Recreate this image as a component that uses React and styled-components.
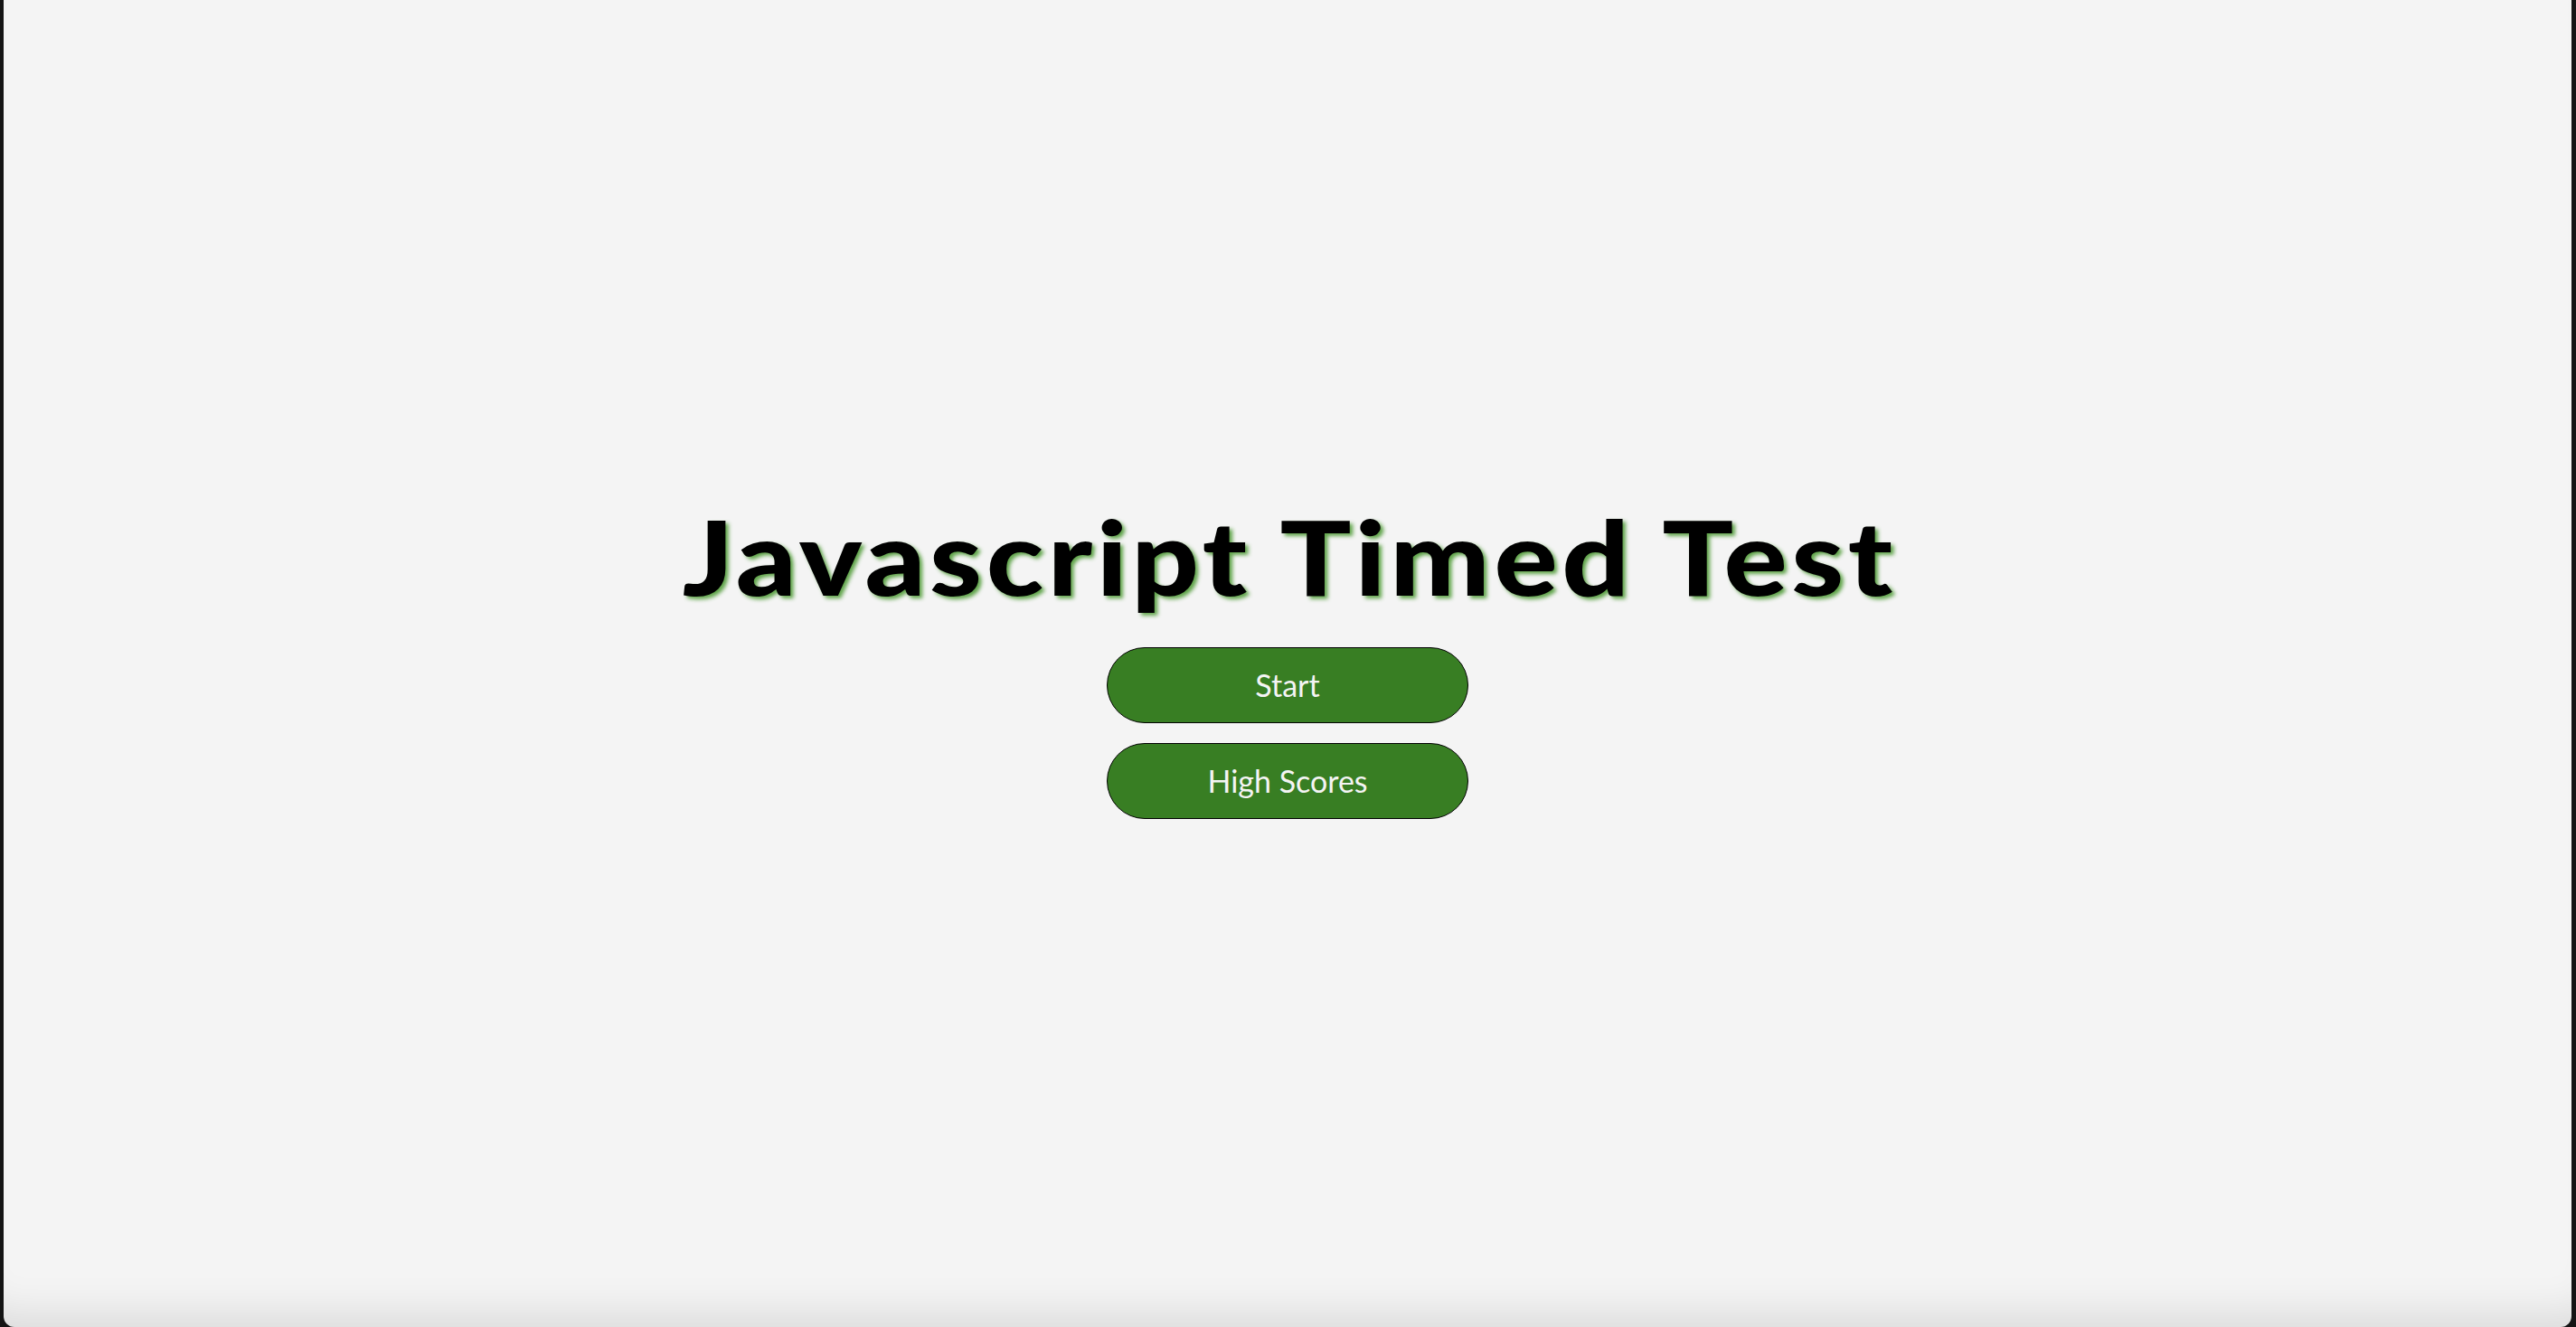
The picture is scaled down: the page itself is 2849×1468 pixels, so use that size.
import React from "react";
import styled, { createGlobalStyle } from "styled-components";

const Global = createGlobalStyle`
  html, body {
    margin: 0;
    padding: 0;
    height: 100%;
    background: #141414;
  }
  #root {
    height: 100%;
  }
`;

const Frame = styled.div`
  height: 100%;
  box-sizing: border-box;
  padding: 0 5px 0 4px;
  display: flex;
`;

const Screen = styled.main`
  flex: 1;
  box-sizing: border-box;
  padding-bottom: 18px;
  background: #f4f4f4;
  border-radius: 0 0 12px 12px;
  box-shadow: inset 0 -50px 45px -35px rgba(0, 0, 0, 0.1);
  display: flex;
  flex-direction: column;
  align-items: center;
  justify-content: center;
  font-family: "Gill Sans", "Lato", "Open Sans", sans-serif;
`;

const Title = styled.h1`
  margin: 0 0 33px 0;
  padding-left: 4px;
  font-size: 115px;
  line-height: 1.2;
  font-weight: 900;
  letter-spacing: 4px;
  transform: scaleX(1.14);
  color: #000;
  text-shadow: 3px 3px 4px rgba(70, 150, 45, 0.85);
  white-space: nowrap;
`;

const Menu = styled.div`
  display: flex;
  flex-direction: column;
  gap: 22px;
`;

const MenuButton = styled.button`
  width: 400px;
  height: 84px;
  box-sizing: border-box;
  border: 1.5px solid #000;
  border-radius: 42px;
  background: #387e23;
  color: #f4f4f4;
  font-family: inherit;
  font-size: 34px;
  font-weight: 400;
  cursor: pointer;
`;

export default function App() {
  return (
    <>
      <Global />
      <Frame>
        <Screen>
          <Title>Javascript Timed Test</Title>
          <Menu>
            <MenuButton>Start</MenuButton>
            <MenuButton>High Scores</MenuButton>
          </Menu>
        </Screen>
      </Frame>
    </>
  );
}
